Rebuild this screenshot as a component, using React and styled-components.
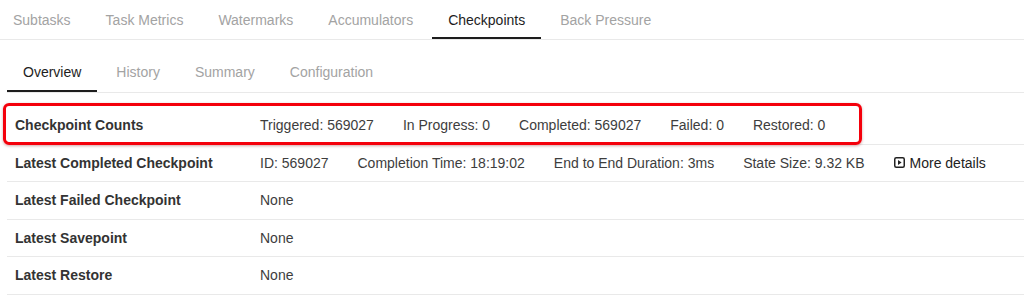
import React from 'react';
import styled, { createGlobalStyle } from 'styled-components';

const GlobalStyle = createGlobalStyle`
  html, body {
    margin: 0;
    padding: 0;
    background: #fff;
  }
  body {
    font-family: "Liberation Sans", Arial, Helvetica, sans-serif;
    font-size: 14px;
    color: #333;
    overflow: hidden;
  }
`;

const Page = styled.div`
  width: 1024px;
  height: 296px;
  overflow: hidden;
`;

const TabBar = styled.nav`
  display: flex;
  gap: 3px;
  height: ${(p) => p.$height}px;
  padding-top: ${(p) => p.$top || 0}px;
  box-sizing: content-box;
  border-bottom: 1px solid #e9e9e9;
  margin-left: ${(p) => p.$indent || 0}px;
`;

const TabList = styled.div`
  display: flex;
  gap: 3px;
  margin-left: ${(p) => p.$shift}px;
`;

const Tab = styled.div`
  display: flex;
  align-items: center;
  padding: 0 16px;
  color: ${(p) => (p.$active ? '#1d1d1d' : '#a3a3a3')};
  box-shadow: ${(p) => (p.$active ? 'inset 0 -2px 0 #1d1d1d' : 'none')};
  white-space: nowrap;
`;

const Table = styled.div`
  margin: 14px 0 0 7px;
`;

const Row = styled.div`
  position: relative;
  display: grid;
  grid-template-columns: 253px 1fr;
  align-items: center;
  height: 37.5px;
  box-sizing: border-box;
  border-bottom: 1px solid #e9e9e9;

  ${(p) =>
    p.$highlight &&
    `
    &::after {
      content: '';
      position: absolute;
      left: -4px;
      top: -4px;
      width: 859px;
      height: 42px;
      box-sizing: border-box;
      border: 3px solid #f4000b;
      border-radius: 6px;
      box-shadow: 0 1px 3px rgba(120, 0, 0, 0.35);
      pointer-events: none;
    }
  `}
`;

const Label = styled.div`
  padding-left: 8px;
  font-weight: 700;
  color: #333;
`;

const Values = styled.div`
  display: flex;
  align-items: center;
  gap: 29px;
  color: #3d3d3d;
  white-space: nowrap;
`;

const DetailsLink = styled.span`
  display: inline-flex;
  align-items: center;
  gap: 5px;
  color: #222;
`;

const PlayIcon = () => (
  <svg width="11" height="11" viewBox="0 0 11 11" aria-hidden="true">
    <rect x="0.75" y="0.75" width="9.5" height="9.5" rx="1.5" fill="none" stroke="#222" strokeWidth="1.5" />
    <path d="M4 3.1 L7.6 5.5 L4 7.9 Z" fill="#222" />
  </svg>
);

const topTabs = ['Subtasks', 'Task Metrics', 'Watermarks', 'Accumulators', 'Checkpoints', 'Back Pressure'];
const subTabs = ['Overview', 'History', 'Summary', 'Configuration'];

const rows = [
  {
    label: 'Checkpoint Counts',
    values: ['Triggered: 569027', 'In Progress: 0', 'Completed: 569027', 'Failed: 0', 'Restored: 0'],
    highlight: true,
  },
  {
    label: 'Latest Completed Checkpoint',
    values: ['ID: 569027', 'Completion Time: 18:19:02', 'End to End Duration: 3ms', 'State Size: 9.32 KB'],
    details: true,
  },
  { label: 'Latest Failed Checkpoint', values: ['None'] },
  { label: 'Latest Savepoint', values: ['None'] },
  { label: 'Latest Restore', values: ['None'] },
];

export default function App() {
  return (
    <Page>
      <GlobalStyle />
      <TabBar $height={39}>
        <TabList $shift={-3}>
          {topTabs.map((t) => (
            <Tab key={t} $active={t === 'Checkpoints'}>{t}</Tab>
          ))}
        </TabList>
      </TabBar>
      <TabBar $height={40} $top={12} $indent={7}>
        <TabList $shift={0}>
          {subTabs.map((t) => (
            <Tab key={t} $active={t === 'Overview'}>{t}</Tab>
          ))}
        </TabList>
      </TabBar>
      <Table>
        {rows.map((r) => (
          <Row key={r.label} $highlight={r.highlight}>
            <Label>{r.label}</Label>
            <Values>
              {r.values.map((v) => (
                <span key={v}>{v}</span>
              ))}
              {r.details && (
                <DetailsLink>
                  <PlayIcon />
                  More details
                </DetailsLink>
              )}
            </Values>
          </Row>
        ))}
      </Table>
    </Page>
  );
}
